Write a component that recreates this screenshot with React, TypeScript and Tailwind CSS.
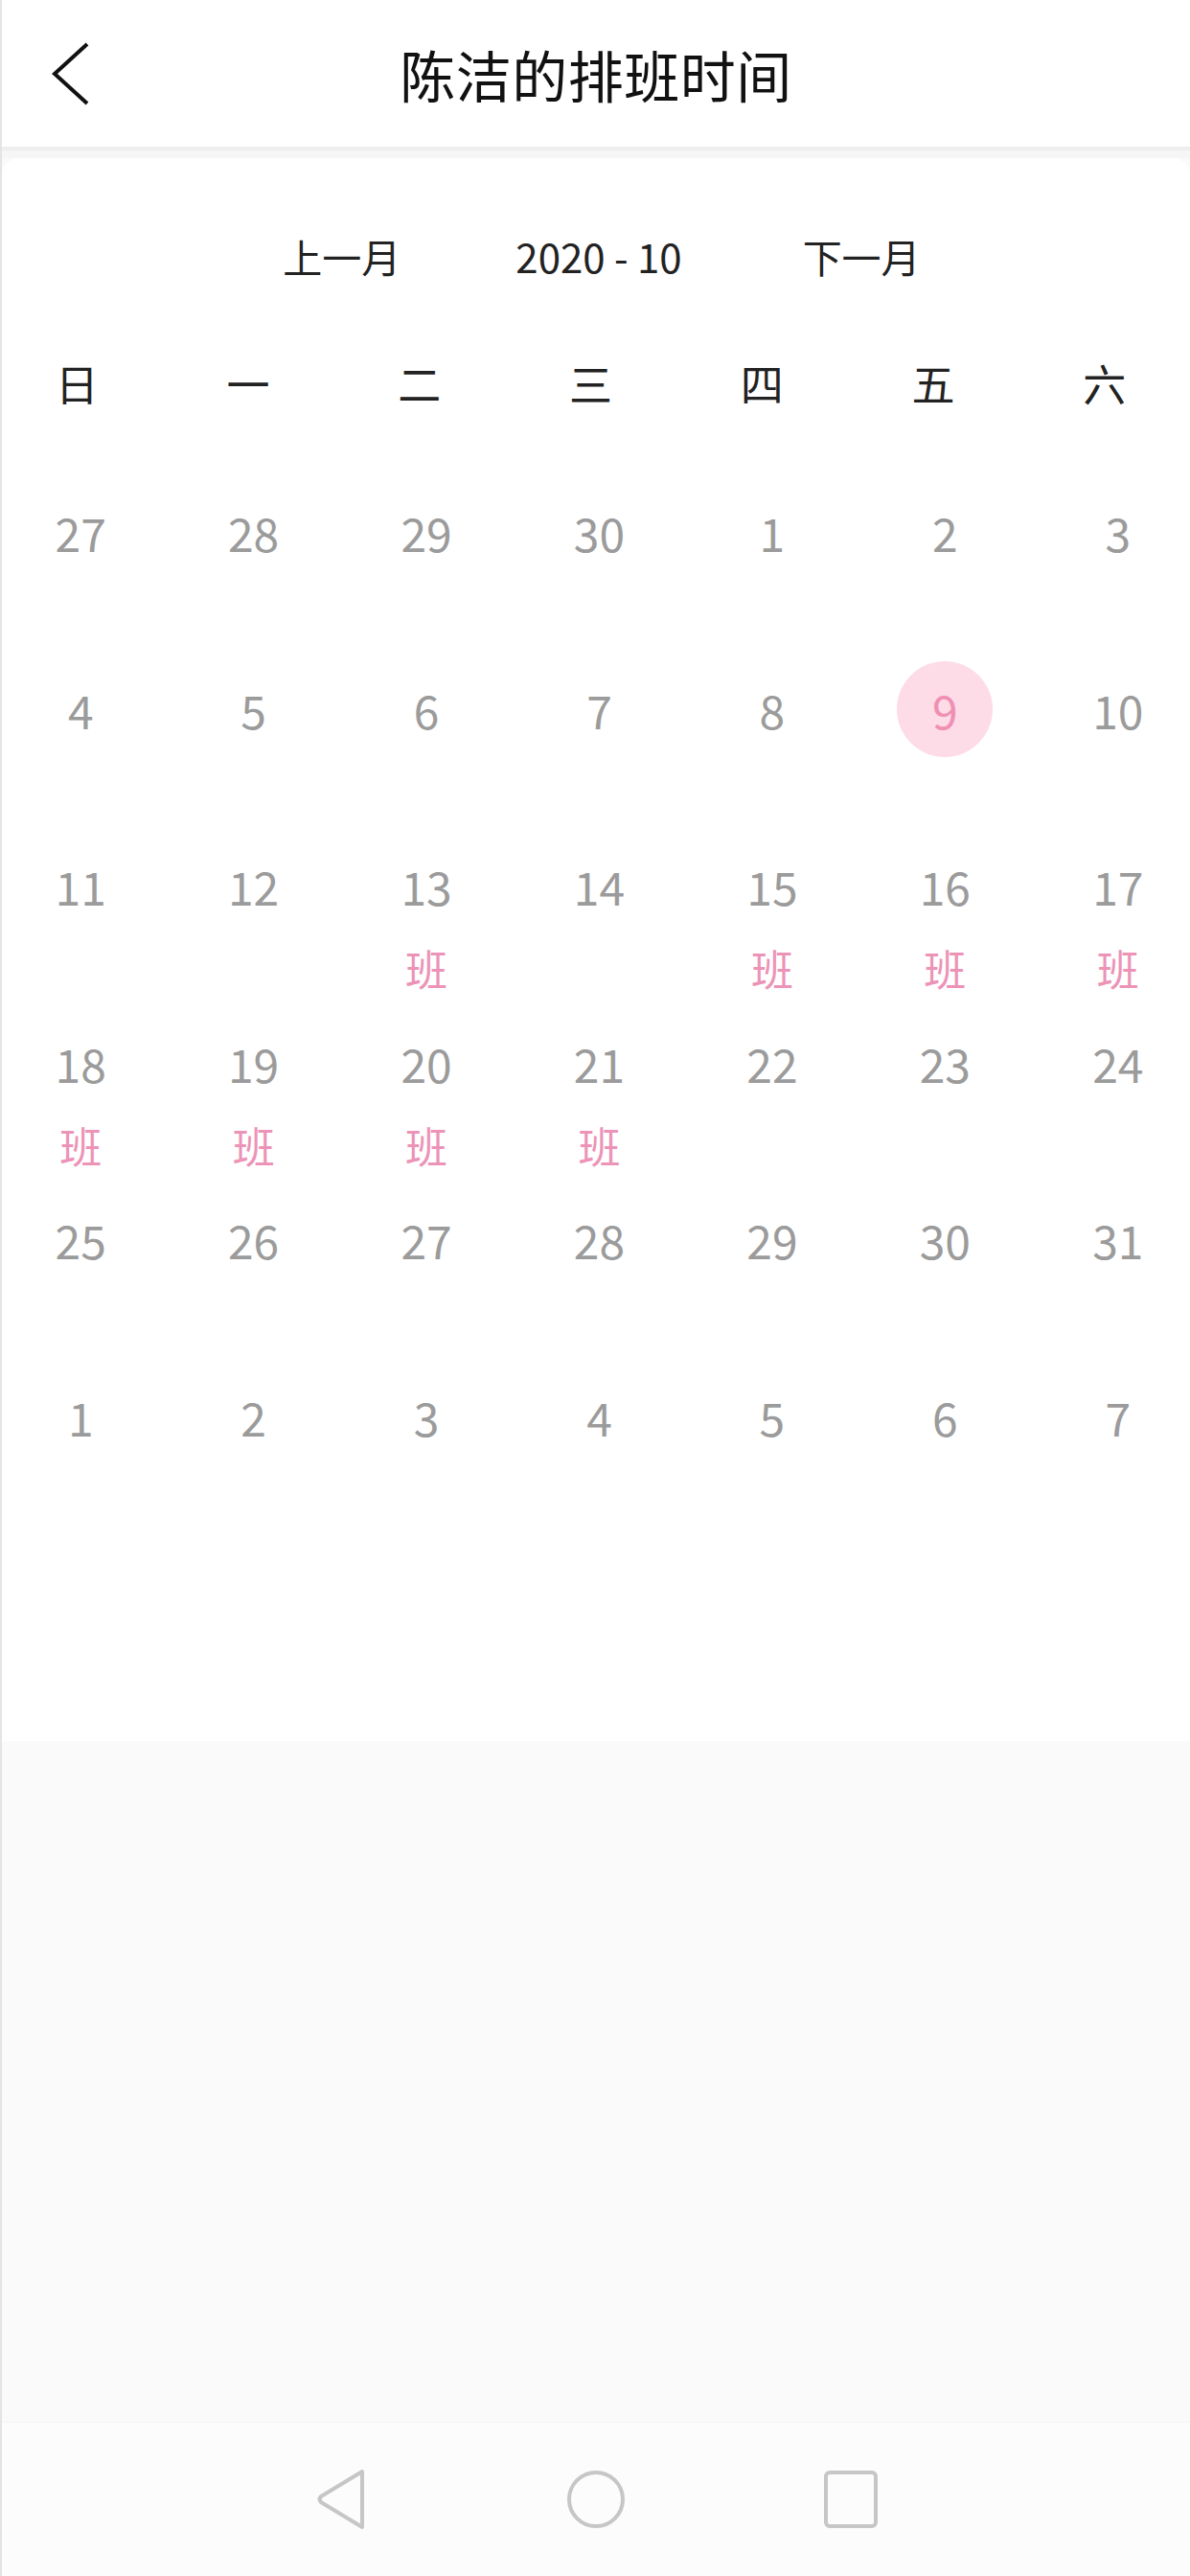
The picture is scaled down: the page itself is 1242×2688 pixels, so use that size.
import React from 'react';

const FONT = { fontFamily: '"Noto Sans CJK SC", "Noto Sans", sans-serif' };

const weekDays = ['日', '一', '二', '三', '四', '五', '六'];

type Day = { n: number; cur: boolean };

const buildDays = (): Day[] => {
  const days: Day[] = [];
  [27, 28, 29, 30].forEach((n) => days.push({ n, cur: false }));
  for (let n = 1; n <= 31; n++) days.push({ n, cur: true });
  for (let n = 1; n <= 7; n++) days.push({ n, cur: false });
  return days;
};

const shiftDays = [13, 15, 16, 17, 18, 19, 20, 21];
const selectedDay = 9;

const BackIcon = () => (
  <svg width="46" height="70" viewBox="0 0 46 70" fill="none">
    <path d="M41 4 L7 35 L41 66" stroke="#111" strokeWidth="4" strokeLinejoin="miter" />
  </svg>
);

const NavBack = () => (
  <svg width="64" height="66" viewBox="0 0 64 66" fill="none">
    <path
      d="M54 4 L54 62 L11 36 Q8 33 11 30 Z"
      stroke="#c6c6c6"
      strokeWidth="4"
      strokeLinejoin="round"
    />
  </svg>
);

const NavHome = () => (
  <svg width="64" height="66" viewBox="0 0 64 66" fill="none">
    <circle cx="32" cy="33" r="28" stroke="#c6c6c6" strokeWidth="4" />
  </svg>
);

const NavRecent = () => (
  <svg width="64" height="66" viewBox="0 0 64 66" fill="none">
    <rect x="6" y="5" width="52" height="56" rx="4" stroke="#c6c6c6" strokeWidth="4" />
  </svg>
);

export default function App() {
  const days = buildDays();

  return (
    <div
      className="min-h-screen w-full flex flex-col bg-[#fafafa] border-l-2 border-[#e4e4e4] overflow-hidden"
      style={FONT}
    >
      {/* header */}
      <header className="h-[157px] bg-white border-b-4 border-[#eeeeee] grid grid-cols-[1fr_auto_1fr] items-center">
        <div className="pl-[48px] flex items-center">
          <BackIcon />
        </div>
        <h1 className="text-[58px] leading-[70px] text-[#111111] font-normal tracking-[0.5px]">陈洁的排班时间</h1>
        <div />
      </header>

      <div className="h-[8px] bg-[#f6f6f6]" />

      {/* calendar card */}
      <section className="h-[1652px] bg-white rounded-t-[18px] overflow-hidden pt-[72px]">
        <div className="flex justify-center items-center pl-[12px] text-[41px] leading-[60px] text-[#222222]">
          <span>上一月</span>
          <span className="ml-[120px] text-[42px]">2020 - 10</span>
          <span className="ml-[126px]">下一月</span>
        </div>

        <div className="mt-[73px] ml-[-11px] w-[1251px] grid grid-cols-7 text-[45px] leading-[60px] text-[#222222]">
          {weekDays.map((d) => (
            <div key={d} className="text-center">
              {d}
            </div>
          ))}
        </div>

        <div className="ml-[-8px] w-[1263px] grid grid-cols-7">
          {days.map((d, i) => {
            const selected = d.cur && d.n === selectedDay;
            const shift = d.cur && shiftDays.includes(d.n);
            return (
              <div key={i} className="h-[184.5px] pt-[75px] flex flex-col items-center">
                <div
                  className={
                    selected
                      ? 'shrink-0 w-[100px] h-[100px] rounded-full bg-[#fddbe7] flex items-center justify-center text-[48px] leading-[56px] text-[#ef8fb2]'
                      : 'shrink-0 w-[100px] h-[100px] rounded-full flex items-center justify-center text-[48px] leading-[56px] text-[#9b9b9b]'
                  }
                >
                  {d.n}
                </div>
                {shift && (
                  <div className="shrink-0 mt-[8px] text-[44px] leading-[56px] text-[#ec93b7]">班</div>
                )}
              </div>
            );
          })}
        </div>
      </section>

      <div className="flex-1" />

      {/* system nav bar */}
      <nav className="h-[161px] bg-[#fcfcfc] border-t border-[#f4f4f4] flex items-center justify-center gap-[202px]">
        <NavBack />
        <NavHome />
        <NavRecent />
      </nav>
    </div>
  );
}
